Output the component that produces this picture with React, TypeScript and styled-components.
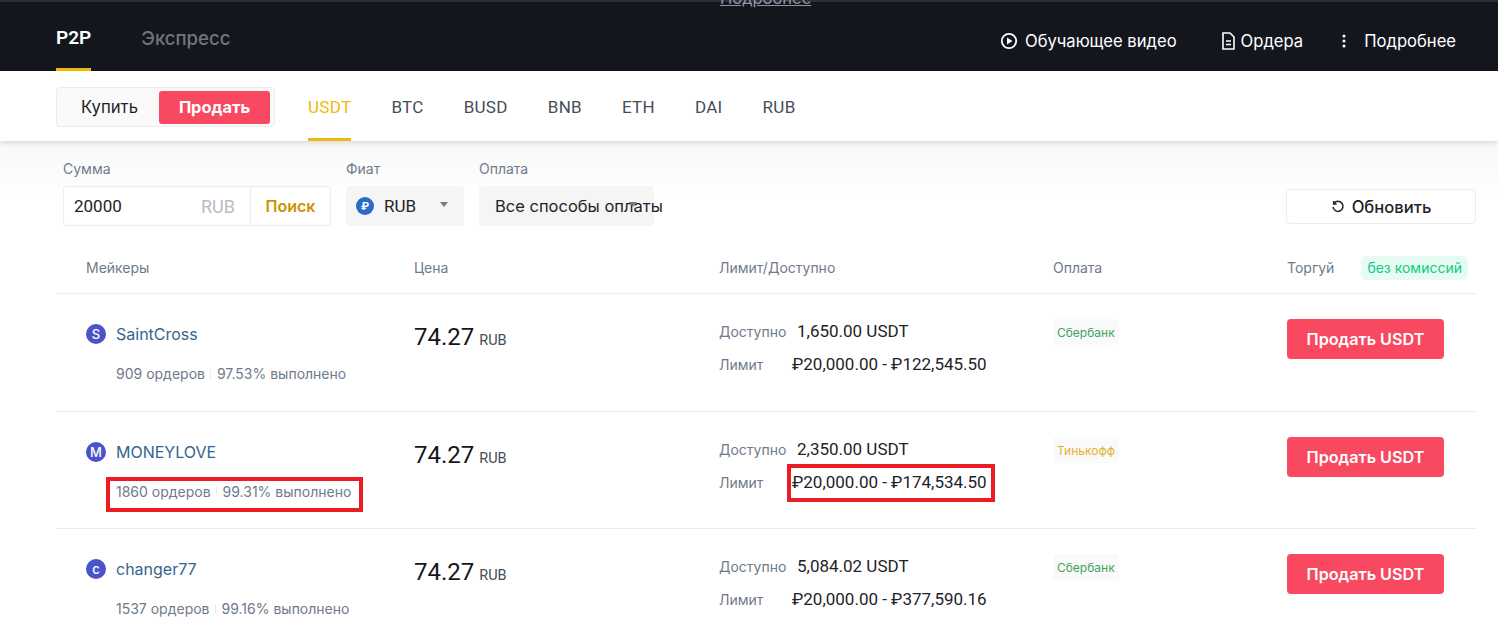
import React from "react";
import styled, { createGlobalStyle } from "styled-components";

const CYR = `Inter, Roboto, "Liberation Sans", sans-serif`;
const LAT = `Roboto, "Liberation Sans", sans-serif`;

const Global = createGlobalStyle`
  html, body { margin: 0; padding: 0; background: #fff; }
  body { width: 1498px; height: 644px; overflow: hidden; font-family: ${CYR}; }
  * { box-sizing: border-box; }
`;
const Page = styled.div`width:1498px;height:644px;overflow:hidden;display:flex;flex-direction:column;background:#fff;`;
const TopBar = styled.header`height:71px;background:#14161e;border-top:2px solid #2b2f36;display:flex;justify-content:space-between;padding:0 42px 0 56px;position:relative;flex:none;`;
const Cut = styled.span`position:absolute;top:-14px;left:720px;color:#8d97a8;font-size:16.5px;text-decoration:underline;`;
const TopTabs = styled.nav`display:flex;gap:50px;`;
const TopTab = styled.div<{$on?:boolean}>`height:69px;padding-top:23px;font-family:${p=>p.$on?LAT:CYR};font-size:${p=>p.$on?"19px":"18.6px"};line-height:26px;font-weight:${p=>p.$on?600:500};color:${p=>p.$on?"#fff":"#6f7680"};border-bottom:${p=>p.$on?"3px solid #f0b90b":"0"};`;
const TopLinks = styled.nav`display:flex;align-items:center;padding-top:9px;`;
const TopLink = styled.div<{$gap:number;$ml:number}>`display:flex;align-items:center;gap:${p=>p.$gap}px;margin-left:${p=>p.$ml}px;font-size:16.6px;color:#fff;`;
const SubBar = styled.div`height:70px;flex:none;display:flex;align-items:flex-start;padding-left:56px;background:#fff;box-shadow:0 2px 5px rgba(0,0,0,.12);position:relative;z-index:1;`;
const Toggle = styled.div`margin-top:16px;width:219px;height:40px;background:#fafafa;border:1px solid #eaecef;border-radius:4px;display:flex;align-items:center;padding:3px;`;
const Buy = styled.div`width:99px;text-align:center;font-size:16.7px;font-weight:400;color:#1e2329;`;
const Sell = styled.div`width:111px;height:33px;border-radius:3px;background:#f84960;color:#fff;font-size:16.4px;font-weight:700;display:flex;align-items:center;justify-content:center;`;
const Coins = styled.div`display:flex;margin-left:33px;gap:40px;font-family:${LAT};`;
const Coin = styled.div<{$on?:boolean}>`height:70px;padding:25px 0 0;font-size:17px;letter-spacing:.3px;line-height:22px;font-weight:400;color:${p=>p.$on?"#f0b90b":"#474d57"};border-bottom:${p=>p.$on?"3px solid #f0b90b":"0"};`;
const Filters = styled.section`height:114px;flex:none;background:linear-gradient(#f8f8f8,#fff 50%);display:flex;padding:19px 22px 0 63px;align-items:flex-start;`;
const Field = styled.div<{$w:number;$mr?:number}>`width:${p=>p.$w}px;margin-right:${p=>p.$mr||0}px;`;
const Label = styled.div`font-size:14px;line-height:18px;color:#707a8a;margin-bottom:8px;`;
const AmountBox = styled.div`height:40px;border:1px solid #eaecef;border-radius:4px;background:#fff;display:flex;align-items:center;font-family:${LAT};`;
const Amount = styled.div`flex:1;padding-left:10px;font-size:17px;color:#1e2329;`;
const Unit = styled.div`font-size:18px;color:#b7bdc6;margin-right:15px;`;
const SearchBtn = styled.div`width:80px;height:38px;border-left:1px solid #eaecef;display:flex;align-items:center;justify-content:center;font-family:${CYR};font-size:16px;font-weight:600;color:#c99400;`;
const Select = styled.div<{$pl:number}>`height:40px;margin-top:1px;background:#f5f5f5;border-radius:4px;display:flex;align-items:center;padding-left:${p=>p.$pl}px;font-size:16.5px;color:#1e2329;position:relative;white-space:nowrap;`;
const Caret = styled.i<{$l:number}>`position:absolute;left:${p=>p.$l}px;top:16px;border-left:4.5px solid transparent;border-right:4.5px solid transparent;border-top:5px solid #707a8a;`;
const Rub = styled.span`width:18px;height:18px;border-radius:50%;background:#2a6bc8;color:#fff;font-size:11px;font-weight:700;display:flex;align-items:center;justify-content:center;margin-right:10px;`;
const RubText = styled.span`font-family:${LAT};font-size:17px;`;
const Refresh = styled.div`margin-left:auto;margin-top:29px;width:190px;height:35px;border:1px solid #eaecef;border-radius:4px;background:#fff;display:flex;align-items:center;justify-content:center;gap:7px;font-size:16.6px;font-weight:500;color:#1e2329;`;
const Table = styled.div`margin:0 22px 0 56px;`;
const grid = `display:grid;grid-template-columns:358px 305px 334px 234px 1fr;`;
const Head = styled.div`${grid}height:39px;padding-top:1px;align-items:flex-start;font-size:14px;color:#707a8a;border-bottom:1px solid #eaecef;`;
const HeadCell = styled.div<{$pl?:number}>`padding-left:${p=>p.$pl||0}px;line-height:24px;display:flex;align-items:center;`;
const Free = styled.span`margin-left:27px;background:#e6fbf3;color:#0ecb81;border-radius:6px;padding:0 6px;font-size:14px;line-height:24px;white-space:nowrap;`;
const Row = styled.div`${grid}height:118px;border-bottom:1px solid #eaecef;padding-top:25px;&:nth-child(3){height:117px;}&:last-child{border-bottom:0;}`;
const NameRow = styled.div`display:flex;align-items:center;gap:10px;height:30px;margin:0 0 0 30px;`;
const Avatar = styled.span`width:20px;height:20px;border-radius:50%;background:#4a54c9;color:#fff;font-size:13px;font-weight:500;display:flex;align-items:center;justify-content:center;`;
const Name = styled.span`font-size:16px;color:#34658c;`;
const Stats = styled.div`display:flex;align-items:center;margin:15px 0 0 60px;font-size:14px;line-height:20px;color:#707a8a;white-space:nowrap;`;
const Sep = styled.i`width:1px;height:10px;background:#eaecef;margin:0 6px 0 5px;`;
const Hl = styled.span`position:absolute;border:4px solid #ec1c24;pointer-events:none;`;
const MakerWrap = styled.div`position:relative;`;
const Price = styled.div`padding-top:3px;display:flex;align-items:baseline;gap:5px;font-family:${LAT};font-size:24px;line-height:30px;font-weight:400;color:#14161e;`;
const PriceUnit = styled.span`font-size:14.5px;font-weight:400;color:#474d57;`;
const Limit = styled.div`position:relative;padding-top:2px;`;
const LimRow = styled.div`display:flex;align-items:center;height:20px;margin-bottom:13px;`;
const LimKey = styled.span<{$w:number}>`width:${p=>p.$w}px;font-size:14px;color:#707a8a;`;
const LimVal = styled.span`font-family:${LAT};font-size:17px;color:#1e2329;white-space:nowrap;`;
const Tag = styled.span<{$c:string}>`display:inline-block;background:#fafafa;border-radius:3px;padding:0 4px;height:26px;line-height:27px;font-size:12px;color:${p=>p.$c};`;
const SellBtn = styled.div`width:157px;height:40px;background:#f84960;border-radius:4px;color:#fff;font-size:16.2px;font-weight:600;display:flex;align-items:center;justify-content:center;`;

const rows = [
  {l:"S",n:"SaintCross",o:"909 ордеров",p:"97.53% выполнено",a:"1,650.00 USDT",m:"₽20,000.00 - ₽122,545.50",t:"Сбербанк",c:"#3fa35f"},
  {l:"M",n:"MONEYLOVE",o:"1860 ордеров",p:"99.31% выполнено",a:"2,350.00 USDT",m:"₽20,000.00 - ₽174,534.50",t:"Тинькофф",c:"#e0b12a",h:true},
  {l:"c",n:"changer77",o:"1537 ордеров",p:"99.16% выполнено",a:"5,084.02 USDT",m:"₽20,000.00 - ₽377,590.16",t:"Сбербанк",c:"#3fa35f"},
];

export default function App(){
  return <Page><Global/>
    <TopBar>
      <Cut>Подробнее</Cut>
      <TopTabs><TopTab $on>P2P</TopTab><TopTab>Экспресс</TopTab></TopTabs>
      <TopLinks>
        <TopLink $gap={7} $ml={0}><svg width="18" height="18" viewBox="0 0 18 18"><circle cx="9" cy="9" r="7.2" fill="none" stroke="#fff" strokeWidth="1.8"/><path d="M7 5.6 12.4 9 7 12.4Z" fill="#fff"/></svg>Обучающее видео</TopLink>
        <TopLink $gap={6} $ml={45}><svg width="13" height="18" viewBox="0 0 13 18"><path d="M1 1h7l4 4v12H1Z M4 9h5 M4 12.500h5" fill="none" stroke="#fff" strokeWidth="1.6"/></svg>Ордера</TopLink>
        <TopLink $gap={18} $ml={39}><svg width="4" height="14" viewBox="0 0 4 14"><circle cx="2" cy="2" r="1.500" fill="#fff"/><circle cx="2" cy="7" r="1.500" fill="#fff"/><circle cx="2" cy="12" r="1.500" fill="#fff"/></svg>Подробнее</TopLink>
      </TopLinks>
    </TopBar>
    <SubBar>
      <Toggle><Buy>Купить</Buy><Sell>Продать</Sell></Toggle>
      <Coins>{["USDT","BTC","BUSD","BNB","ETH","DAI","RUB"].map((c,i)=><Coin key={c} $on={i===0}>{c}</Coin>)}</Coins>
    </SubBar>
    <Filters>
      <Field $w={268} $mr={15}><Label>Сумма</Label><AmountBox><Amount>20000</Amount><Unit>RUB</Unit><SearchBtn>Поиск</SearchBtn></AmountBox></Field>
      <Field $w={118} $mr={15}><Label>Фиат</Label><Select $pl={10}><Rub>₽</Rub><RubText>RUB</RubText><Caret $l={94}/></Select></Field>
      <Field $w={175}><Label>Оплата</Label><Select $pl={16}>Все способы оплаты<Caret $l={150}/></Select></Field>
      <Refresh><svg width="14" height="14" viewBox="0 0 14 14"><path d="M3 3.300A5 5 0 1 1 2 7M2.600 1v3h3" fill="none" stroke="#1e2329" strokeWidth="1.500"/></svg>Обновить</Refresh>
    </Filters>
    <Table>
      <Head><HeadCell $pl={30}>Мейкеры</HeadCell><HeadCell>Цена</HeadCell><HeadCell>Лимит/Доступно</HeadCell><HeadCell>Оплата</HeadCell><HeadCell>Торгуй<Free>без комиссий</Free></HeadCell></Head>
      {rows.map(r=><Row key={r.n}>
        <MakerWrap>
          <NameRow><Avatar>{r.l}</Avatar><Name>{r.n}</Name></NameRow>
          <Stats>{r.o}<Sep/>{r.p}</Stats>
          {r.h && <Hl style={{left:50,top:40,width:257,height:35}}/>}
        </MakerWrap>
        <Price>74.27<PriceUnit>RUB</PriceUnit></Price>
        <Limit>
          <LimRow><LimKey $w={78}>Доступно</LimKey><LimVal>{r.a}</LimVal></LimRow>
          <LimRow><LimKey $w={73}>Лимит</LimKey><LimVal>{r.m}</LimVal></LimRow>
          {r.h && <Hl style={{left:68,top:27,width:208,height:38}}/>}
        </Limit>
        <div><Tag $c={r.c}>{r.t}</Tag></div>
        <div><SellBtn>Продать USDT</SellBtn></div>
      </Row>)}
    </Table>
  </Page>;
}
